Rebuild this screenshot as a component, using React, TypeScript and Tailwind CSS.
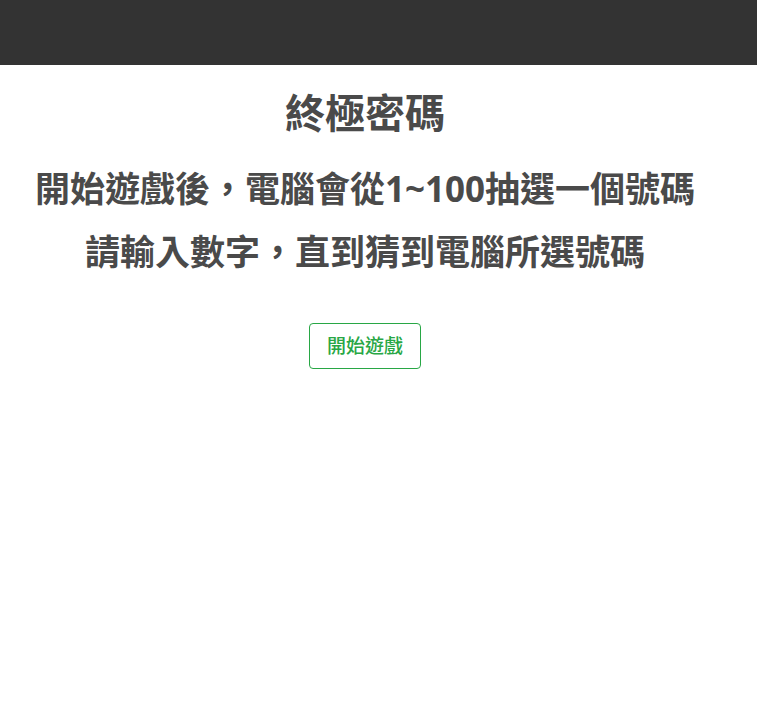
export default function App() {
  return (
    <div className="min-h-screen bg-white font-['Noto_Sans','Noto_Sans_CJK_TC',sans-serif] text-[#4a4a4a]">
      <header className="h-[65px] bg-[#333333]" />
      <main className="flex w-[730px] flex-col items-center text-center">
        <h1 className="mt-[20px] text-[40px] leading-[56px] font-bold">終極密碼</h1>
        <h2 className="mt-[16px] text-[35px] leading-[63px] font-bold">
          開始遊戲後，電腦會從1~100抽選一個號碼
          <br />
          請輸入數字，直到猜到電腦所選號碼
        </h2>
        <button className="mt-[40px] h-[46px] rounded-[4px] border border-[#28a745] px-[17px] text-[19px] font-medium text-[#28a745]">
          開始遊戲
        </button>
      </main>
    </div>
  );
}
